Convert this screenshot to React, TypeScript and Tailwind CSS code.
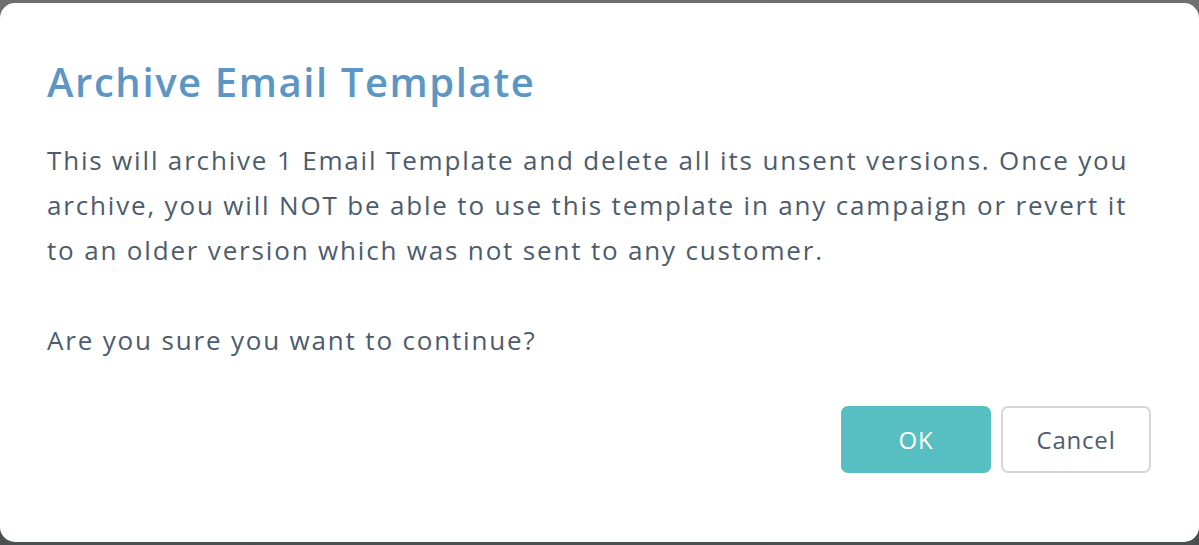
import React from "react";

export default function App() {
  return (
    <div className="h-[545px] w-full bg-gradient-to-b from-[#6f6f6f] to-[#4a4f50] pt-[3px] overflow-hidden">
      <div
        className="flex h-[539px] w-full flex-col rounded-[15px] bg-white px-[47px] pt-[55px]"
        style={{ fontFamily: '"Open Sans", "Liberation Sans", sans-serif' }}
      >
        <h1 className="text-[40px] font-semibold leading-[48px] tracking-[1.6px] text-[#5b96c5]">
          Archive Email Template
        </h1>
        <div className="mt-[32px] whitespace-nowrap text-[26px] leading-[45px] tracking-[1.83px] text-[#4c5c6d]">
          <p>
            This will archive 1 Email Template and delete all its unsent versions. Once you
            <br />
            archive, you will NOT be able to use this template in any campaign or revert it
            <br />
            to an older version which was not sent to any customer.
          </p>
          <p className="mt-[45px]">Are you sure you want to continue?</p>
        </div>
        <div className="mt-[43px] flex justify-end gap-[10px] pr-[1px]">
          <button className="h-[67px] w-[150px] rounded-[7px] bg-[#57bfc1] text-[24px] tracking-[0.8px] text-white">
            OK
          </button>
          <button className="h-[67px] w-[150px] rounded-[7px] border-2 border-[#d3d7dc] bg-white text-[24px] tracking-[0.8px] text-[#4c5c6d]">
            Cancel
          </button>
        </div>
      </div>
    </div>
  );
}
